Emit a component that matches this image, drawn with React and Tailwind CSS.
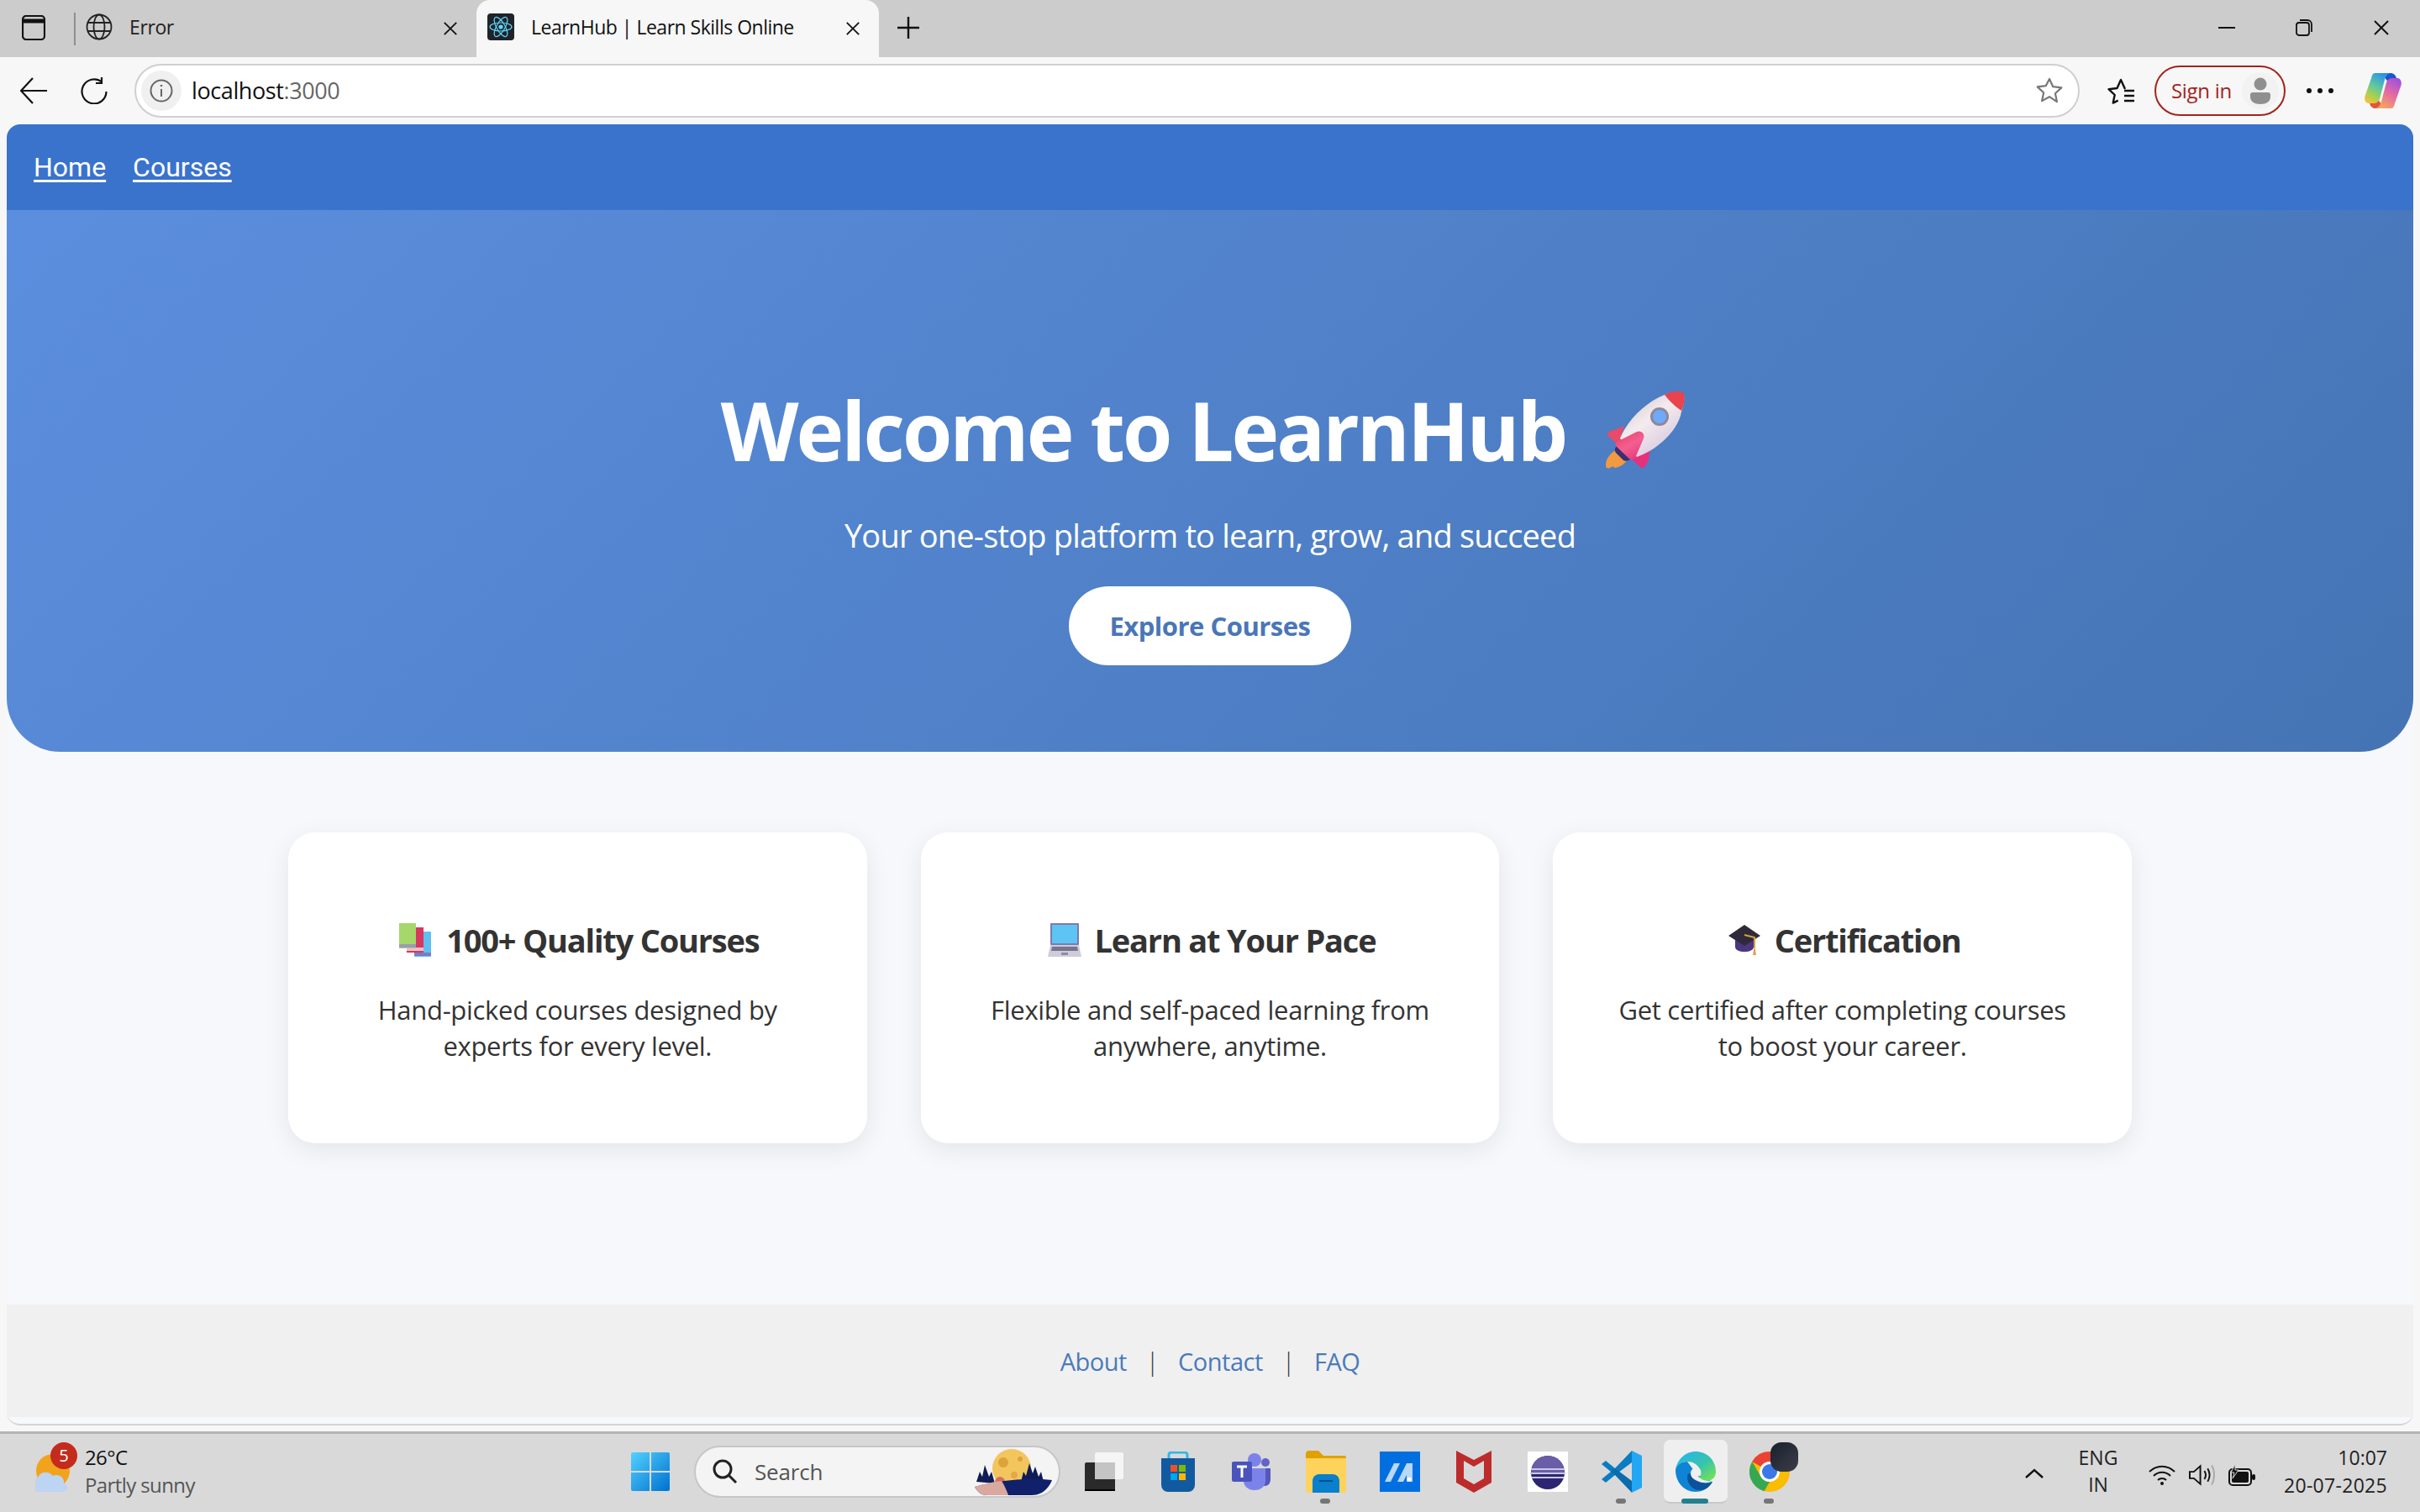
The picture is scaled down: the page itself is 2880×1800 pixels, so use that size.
const UI = "font-['Open_Sans',sans-serif]";

function Close({ className = "" }) {
  return (
    <svg viewBox="0 0 20 20" className={className} fill="none" stroke="#111" strokeWidth="2">
      <path d="M2 2l16 16M18 2L2 18" />
    </svg>
  );
}

function Globe() {
  return (
    <svg viewBox="0 0 32 32" className="w-8 h-8" fill="none" stroke="#222" strokeWidth="1.8">
      <circle cx="16" cy="16" r="14.5" />
      <ellipse cx="16" cy="16" rx="6.5" ry="14.5" />
      <path d="M2 11h28M2 21h28" />
    </svg>
  );
}

function ReactIcon() {
  return (
    <svg viewBox="0 0 32 32" className="w-8 h-8">
      <rect width="32" height="32" rx="4" fill="#20232a" />
      <g fill="none" stroke="#61dafb" strokeWidth="1.2">
        <ellipse cx="16" cy="16" rx="13" ry="5" />
        <ellipse cx="16" cy="16" rx="13" ry="5" transform="rotate(60 16 16)" />
        <ellipse cx="16" cy="16" rx="13" ry="5" transform="rotate(120 16 16)" />
      </g>
      <circle cx="16" cy="16" r="2.6" fill="#61dafb" />
    </svg>
  );
}

function TabStrip() {
  return (
    <div className="h-[68px] bg-[#cccccc] flex items-stretch shrink-0">
      <div className="w-[88px] flex items-center pl-[26px] pb-[2px]">
        <svg viewBox="0 0 28 30" className="w-[28px] h-[30px]" fill="none" stroke="#111" strokeWidth="2.2">
          <rect x="1" y="1" width="26" height="28" rx="4" />
          <path d="M1 7h26" strokeWidth="5" />
        </svg>
      </div>
      <div className="w-[479px] flex items-center pl-[14px] pb-[4px] relative">
        <div className="absolute left-0 top-[15px] w-[2px] h-[39px] bg-[#8f8f8f]" />
        <Globe />
        <span className="ml-[20px] text-[23px] text-[#222] tracking-[-0.4px]">Error</span>
        <Close className="w-[18px] h-[18px] absolute left-[439px] top-[25px]" />
      </div>
      <div className="w-[479px] bg-[#f7f7f7] rounded-t-[16px] flex items-center pl-[13px] pb-[4px] relative">
        <ReactIcon />
        <span className="ml-[20px] text-[23px] text-[#111] tracking-[-0.5px]">LearnHub | Learn Skills Online</span>
        <Close className="w-[18px] h-[18px] absolute left-[439px] top-[25px]" />
      </div>
      <div className="w-[22px]" />
      <div className="flex items-center pb-[3px]">
        <svg viewBox="0 0 26 26" className="w-[26px] h-[26px]" fill="none" stroke="#111" strokeWidth="2.4">
          <path d="M13 0v26M0 13h26" />
        </svg>
      </div>
      <div className="flex-1" />
      <div className="flex items-center pr-[36px] gap-[72px] pb-[2px]">
        <div className="w-[20px] h-[2px] bg-[#111]" />
        <svg viewBox="0 0 20 20" className="w-[20px] h-[20px]" fill="none" stroke="#111" strokeWidth="1.8">
          <rect x="1" y="4" width="15" height="15" rx="3" />
          <path d="M5 1h9a5 5 0 0 1 5 5v9" />
        </svg>
        <Close className="w-[20px] h-[20px]" />
      </div>
    </div>
  );
}

function Copilot() {
  const ribbon = "M12 0H31C27 1 25 4 24 8L18 31C17 34 14 36 11 36H5C1 36-1 31 1 26L8 6C9 2 10 0 12 0Z";
  return (
    <svg viewBox="0 0 44 42" className="w-[44px] h-[42px]">
      <defs>
        <linearGradient id="cpa" x1="0.7" y1="0" x2="0.2" y2="1">
          <stop offset="0" stopColor="#2b8fef" />
          <stop offset="0.45" stopColor="#5cc8a0" />
          <stop offset="0.75" stopColor="#a8d050" />
          <stop offset="1" stopColor="#f4c23d" />
        </linearGradient>
        <linearGradient id="cpb" x1="0.7" y1="0" x2="0.2" y2="1">
          <stop offset="0" stopColor="#f6a660" />
          <stop offset="0.5" stopColor="#e46aa0" />
          <stop offset="1" stopColor="#a050e0" />
        </linearGradient>
      </defs>
      <path d="M20 0h11c3 0 6 2 7 6l2 4c-4-2-9-2-11 2z" fill="#1e56c9" />
      <path d="M24 42H13c-3 0-6-2-7-6l-2-4c4 2 9 2 11-2z" fill="#e0583a" />
      <path d={ribbon} fill="url(#cpa)" />
      <path d={ribbon} fill="url(#cpb)" transform="rotate(180 22 21)" />
    </svg>
  );
}

function Toolbar() {
  return (
    <div className="h-[80px] bg-[#f7f7f7] flex items-center shrink-0 relative">
      <div className="w-[96px] pl-[24px] flex items-center">
        <svg viewBox="0 0 32 32" className="w-[32px] h-[32px]" fill="none" stroke="#111" strokeWidth="2.2">
          <path d="M1 16h31M15 1L1 16l14 15" />
        </svg>
      </div>
      <div className="w-[64px] flex items-center">
        <svg viewBox="0 0 32 32" className="w-[32px] h-[32px]" fill="none" stroke="#111" strokeWidth="2.2">
          <path d="M25 5.5A14.5 14.5 0 1 0 30.5 17M25 0v7h-7" />
        </svg>
      </div>
      <div className="w-[2315px] h-[64px] bg-white border-2 border-[#cfcfcf] rounded-full flex items-center pl-[6px] pr-[18px]">
        <div className="w-[48px] h-[48px] rounded-full bg-[#f0f0f0] flex items-center justify-center">
          <svg viewBox="0 0 28 28" className="w-[28px] h-[28px]" fill="none" stroke="#666" strokeWidth="2">
            <circle cx="14" cy="14" r="12.5" />
            <path d="M14 12v9" />
            <path d="M14 7v2" strokeWidth="2.4" />
          </svg>
        </div>
        <span className="ml-[12px] text-[27px] text-[#111] tracking-[-0.4px]">
          localhost<span className="text-[#666]">:3000</span>
        </span>
        <div className="flex-1" />
        <svg viewBox="0 0 32 32" className="w-[32px] h-[32px]" fill="none" stroke="#777" strokeWidth="2.2" strokeLinejoin="round">
          <path d="M16 2l4.3 9.2 10 1.2-7.4 6.8 2 9.9L16 23.2l-8.900 4.900 2-9.900-7.400-6.800 10-1.200z" />
        </svg>
      </div>
      <div className="w-[33px]" />
      <svg viewBox="0 0 32 32" className="w-[32px] h-[32px]" fill="none" stroke="#111" strokeWidth="2.4" strokeLinejoin="round">
        <path d="M21 14l-5-11-4.500 10-10 1.200 7.200 6.800-2 9.600 6-3" />
        <path d="M20 16h12M20 22h12M20 28h12" />
      </svg>
      <div className="w-[24px]" />
      <div className="w-[156px] h-[60px] rounded-full border-2 border-[#a3231c] flex items-center pl-[18px] relative">
        <span className="text-[24px] text-[#a3231c] tracking-[-0.3px]">Sign in</span>
        <div className="absolute right-[6px] top-[6px] w-[44px] h-[44px] rounded-full bg-[#f2f2f2] flex items-center justify-center">
          <svg viewBox="0 0 24 32" className="w-[24px] h-[32px]" fill="#8f8f8f">
            <circle cx="12" cy="8" r="7.500" />
            <path d="M0 21c0-2 1-3 3-3h18c2 0 3 1 3 3v2c0 6-5 9-12 9S0 29 0 23z" />
          </svg>
        </div>
      </div>
      <div className="w-[25px]" />
      <div className="flex gap-[7px] w-[69px]">
        <div className="w-[6px] h-[6px] rounded-full bg-[#111]" />
        <div className="w-[6px] h-[6px] rounded-full bg-[#111]" />
        <div className="w-[6px] h-[6px] rounded-full bg-[#111]" />
      </div>
      <Copilot />
    </div>
  );
}

function Rocket() {
  return (
    <svg viewBox="0 0 100 100" className="w-[100px] h-[100px]">
      <defs>
        <linearGradient id="rb" x1="0.2" y1="0.1" x2="0.8" y2="0.9">
          <stop offset="0" stopColor="#d8ccd2" />
          <stop offset="0.4" stopColor="#f3ecef" />
          <stop offset="1" stopColor="#d6c6dc" />
        </linearGradient>
        <linearGradient id="rf" x1="0.2" y1="0" x2="0.8" y2="1">
          <stop offset="0" stopColor="#ee3f6a" />
          <stop offset="0.5" stopColor="#f26090" />
          <stop offset="1" stopColor="#e8357a" />
        </linearGradient>
      </defs>
      <path d="M18 73C10 78 5 84 5 92C5 96 8 96 10 95C12 93 14 93 16 95C22 94 28 90 30 86Z" fill="#f19a40" />
      <path d="M27 45L9 52C6 54 7 56 9 58L20 68Z" fill="#e84a6a" />
      <path d="M58 73C57 82 55 90 51 94C49 96 47 95 45 93L33 82Z" fill="#e6307c" />
      <path d="M75 8C50 18 30 40 22 60L42 82C70 72 92 48 95 28C98 20 99 12 98 8C94 4 84 4 75 8Z" fill="url(#rb)" />
      <path d="M75 8C84 3 94 2 98 7C100 12 98 20 95 27C88 22 80 15 75 8Z" fill="#e8434f" />
      <path d="M18 69L34 85C31 87 28 87 26 86L17 77C15 74 16 71 18 69Z" fill="#3a2f72" />
      <path d="M42 52L20 63C16 65 16 68 18 70L33 84C36 86 39 85 41 81L50 60C52 54 47 50 42 52Z" fill="url(#rf)" />
      <circle cx="69" cy="34" r="11" fill="#8f8798" />
      <circle cx="69" cy="34" r="8" fill="#6ea9fb" />
    </svg>
  );
}

function Books() {
  return (
    <svg viewBox="0 0 40 40" className="w-[40px] h-[40px]">
      <rect x="18" y="10" width="20" height="30" rx="1" fill="#60bff0" />
      <rect x="18" y="35" width="20" height="4" fill="#7a7cc8" />
      <rect x="9" y="5" width="20" height="30" fill="#d6385e" />
      <rect x="9" y="29" width="20" height="4" fill="#e8c2cc" />
      <rect x="0" y="0" width="20" height="30" fill="#a5d76a" />
      <rect x="0" y="25" width="20" height="4" fill="#9d9ab8" />
    </svg>
  );
}

function Laptop() {
  return (
    <svg viewBox="0 0 40 40" className="w-[40px] h-[40px]">
      <rect x="3" y="0" width="34" height="26" rx="1" fill="#7d7ab0" />
      <rect x="5" y="2" width="30" height="22" fill="#5ec4f4" />
      <path d="M3 26h34l3 14H0z" fill="#cfcbdc" />
      <path d="M5 28h30l1 5H4z" fill="#77748c" />
      <rect x="16" y="35" width="8" height="3" fill="#8f8ca0" />
    </svg>
  );
}

function Cap() {
  return (
    <svg viewBox="0 0 40 40" className="w-[40px] h-[40px]">
      <path d="M9 16h22v12c0 4-5 6-11 6S9 32 9 28z" fill="#4b3680" />
      <path d="M20 2l19 13-19 12L1 15z" fill="#2f2a3a" />
      <path d="M20 14l12 3v12" fill="none" stroke="#d9a13c" strokeWidth="2" />
      <path d="M32 26l2 12h-4z" fill="#ec9a4a" />
    </svg>
  );
}

const cards = [
  { Icon: Books, title: "100+ Quality Courses", lines: ["Hand-picked courses designed by", "experts for every level."] },
  { Icon: Laptop, title: "Learn at Your Pace", lines: ["Flexible and self-paced learning from", "anywhere, anytime."] },
  { Icon: Cap, title: "Certification", lines: ["Get certified after completing courses", "to boost your career."] },
];

function Card({ Icon, title, lines }) {
  return (
    <div className="h-[370px] bg-white rounded-[32px] shadow-[0_8px_30px_rgba(0,0,0,0.08)] flex flex-col items-center pt-[100px]">
      <h3 className="flex items-center gap-[16px] h-[56px] pl-[4px] text-[38px] font-bold text-[#333] tracking-[-1.2px]">
        <Icon />
        {title}
      </h3>
      <div className="mt-[34px] text-[31px] leading-[43px] text-[#333] text-center tracking-[-0.3px]">
        {lines.map((line) => (
          <p key={line}>{line}</p>
        ))}
      </div>
    </div>
  );
}

function Page() {
  return (
    <div className="flex-1 mx-[8px] rounded-[16px] overflow-hidden bg-[#f6f8fc] flex flex-col border-b-2 border-[#d4d4d4]">
      <nav className="h-[102px] bg-[#3973cc] flex items-center gap-[32px] pl-[32px] shrink-0 font-['Roboto',sans-serif] text-[32px] text-white">
        <a className="underline underline-offset-[4px]">Home</a>
        <a className="underline underline-offset-[4px]">Courses</a>
      </nav>
      <section className="h-[645px] shrink-0 rounded-b-[64px] bg-[linear-gradient(135deg,#5b8ede,#4574b4)] flex flex-col items-center text-white pt-[190px]">
        <h1 className="h-[144px] flex items-center text-[96px] font-bold tracking-[-3px] leading-none">
          <span>Welcome to LearnHub</span>
          <span className="ml-[43px] mr-[-2px] w-[118px]">
            <Rocket />
          </span>
        </h1>
        <p className="mt-[29px] h-[48px] leading-[48px] text-[38px] tracking-[-0.8px]">Your one-stop platform to learn, grow, and succeed</p>
        <a className="mt-[37px] w-[336px] h-[94px] rounded-full bg-white flex items-center justify-center text-[31px] font-bold text-[#4a76b8] tracking-[-0.5px]">
          Explore Courses
        </a>
      </section>
      <main className="flex-1 pt-[96px]">
        <div className="w-[2194px] ml-[335px] grid grid-cols-3 gap-[64px]">
          {cards.map((card) => (
            <Card key={card.title} {...card} />
          ))}
        </div>
      </main>
      <footer className="h-[134px] mb-[8px] bg-[#f0f0f0] flex items-center justify-center pt-[2px] text-[29px] text-[#4a7aba] tracking-[-0.5px] shrink-0">
        <a>About</a>
        <span className="mx-[23px] text-[#333] font-light">|</span>
        <a>Contact</a>
        <span className="mx-[23px] text-[#333] font-light">|</span>
        <a>FAQ</a>
      </footer>
    </div>
  );
}

function Slot({ children, dot, active }) {
  return (
    <div className="w-[88px] h-[90px] flex items-center justify-center relative">
      {active && <div className="absolute left-[6px] top-[7px] w-[76px] h-[76px] rounded-[8px] bg-[#efefef] border-b-2 border-[#c8c8c8]" />}
      <div className="relative">{children}</div>
      {dot && <div className="absolute left-[37px] top-[77px] w-[12px] h-[6px] rounded-full bg-[#767676]" />}
      {active && <div className="absolute left-[27px] top-[77px] w-[32px] h-[6px] rounded-full bg-[#24808f]" />}
    </div>
  );
}

function WinLogo() {
  return (
    <svg viewBox="0 0 46 46" className="w-[46px] h-[46px]">
      <defs>
        <linearGradient id="wl" x1="0" y1="0" x2="1" y2="1">
          <stop offset="0" stopColor="#52d2ff" />
          <stop offset="1" stopColor="#0070cf" />
        </linearGradient>
      </defs>
      <path d="M2 0h20v22H0V2a2 2 0 0 1 2-2zM24 0h20a2 2 0 0 1 2 2v20H24zM0 24h22v22H2a2 2 0 0 1-2-2zM24 24h22v20a2 2 0 0 1-2 2H24z" fill="url(#wl)" />
    </svg>
  );
}

function SearchArt() {
  return (
    <svg viewBox="0 0 92 56" className="w-[92px] h-[56px]">
      <circle cx="44" cy="24" r="23" fill="#f3c65d" />
      <circle cx="34" cy="17" r="6" fill="#dca33b" />
      <circle cx="54" cy="13" r="3" fill="#dca33b" />
      <circle cx="47" cy="32" r="4" fill="#e4a84a" />
      <circle cx="30" cy="40" r="6" fill="#d9705c" />
      <path d="M2 40l4-12 3 6 3-14 5 14 3-6 4 14zM55 40l3-12 3 5 4-15 4 12 3-8 4 12 3-6 3 12z" fill="#101c56" />
      <path d="M0 46c20-6 60-12 92-8-4 10-12 18-24 18H14C8 56 3 52 0 46z" fill="#11206a" />
      <path d="M0 46c10-3 22-6 32-7 4 6 6 12 8 17H14C8 56 3 52 0 46z" fill="#d9a9a0" />
    </svg>
  );
}

function TaskView() {
  return (
    <svg viewBox="0 0 46 46" className="w-[46px] h-[46px]">
      <rect x="0" y="12" width="36" height="34" rx="2" fill="#2a2a2a" />
      <rect x="0" y="44" width="36" height="2" fill="#000" />
      <rect x="12" y="0" width="34" height="32" rx="2" fill="#f5f5f5" />
      <rect x="12" y="12" width="24" height="20" fill="#c4c4c4" />
    </svg>
  );
}

function Store() {
  return (
    <svg viewBox="0 0 40 48" className="w-[40px] h-[48px]">
      <path d="M9 8V4a3 3 0 0 1 3-3h16a3 3 0 0 1 3 3v4" fill="none" stroke="#2fb8ea" strokeWidth="3" />
      <path d="M0 8h40v32a8 8 0 0 1-8 8H8a8 8 0 0 1-8-8z" fill="#125aa0" />
      <rect x="11" y="16" width="8" height="8" fill="#f25022" />
      <rect x="21" y="16" width="8" height="8" fill="#7fba00" />
      <rect x="11" y="26" width="8" height="8" fill="#00a4ef" />
      <rect x="21" y="26" width="8" height="8" fill="#ffb900" />
    </svg>
  );
}

function Teams() {
  return (
    <svg viewBox="0 0 48 44" className="w-[48px] h-[44px]">
      <circle cx="40" cy="11" r="5" fill="#6264c7" />
      <path d="M32 18h14v13c0 5-3 8-7 8s-7-3-7-8z" fill="#5558ba" />
      <circle cx="27" cy="8" r="8" fill="#7b83eb" />
      <path d="M14 18h26v15c0 6-5 11-13 11s-13-5-13-11z" fill="#7b83eb" />
      <rect x="0" y="10" width="24" height="24" rx="2" fill="#4b53bc" />
      <path d="M6 16h12M12 16v13" stroke="#fff" strokeWidth="3" fill="none" />
    </svg>
  );
}

function Folder() {
  return (
    <svg viewBox="0 0 48 50" className="w-[48px] h-[50px]">
      <path d="M0 4a4 4 0 0 1 4-4h11l6 6h25a2 2 0 0 1 2 2v6H0z" fill="#dfa000" />
      <path d="M0 9h48v38a3 3 0 0 1-3 3H3a3 3 0 0 1-3-3z" fill="#fdd35c" />
      <path d="M8 50V36a8 8 0 0 1 8-8h16a8 8 0 0 1 8 8v14z" fill="#0a7fcb" />
      <path d="M16 36h16" stroke="#05508c" strokeWidth="2" />
    </svg>
  );
}

function MaLogo() {
  return (
    <svg viewBox="0 0 48 48" className="w-[48px] h-[48px]">
      <rect width="48" height="48" fill="#026fe0" />
      <path d="M6 36l11-22h7L13 36zM21 36l11-22h7v22h-7v-8l-4 8z" fill="#b8d8f8" />
      <circle cx="35" cy="33" r="2.500" fill="#fff" />
    </svg>
  );
}

function McAfee() {
  return (
    <svg viewBox="0 0 42 50" className="w-[42px] h-[50px]">
      <path d="M0 0l21 11L42 0v38L21 50 0 38zM9 12v21l12 7 12-7V12l-12 7z" fill="#bd2c2c" fillRule="evenodd" />
    </svg>
  );
}

function Eclipse() {
  return (
    <svg viewBox="0 0 48 48" className="w-[48px] h-[48px]">
      <rect width="48" height="48" fill="#fff" />
      <circle cx="24" cy="25" r="20" fill="#2c2571" />
      <path d="M4 25a20 20 0 0 1 40 0z" fill="#6a5ea8" />
      <path d="M4 21h40M3 26h42M5 31h38" stroke="#c8c8e4" strokeWidth="2" />
    </svg>
  );
}

function VsCode() {
  return (
    <svg viewBox="0 0 48 50" className="w-[48px] h-[50px]">
      <path d="M36 0l12 6v38l-12 6z" fill="#23a7f2" />
      <path d="M36 0v14L16 29 5 38 0 34l11-9L0 16l5-4 11 9z" fill="#0b7cc1" />
      <path d="M36 50L16 29l-5-4 5-4L36 36z" fill="#0a6cad" />
    </svg>
  );
}

function Edge() {
  return (
    <svg viewBox="0 0 48 48" className="w-[48px] h-[48px]">
      <defs>
        <linearGradient id="eg" x1="0.2" y1="0" x2="1" y2="0.8">
          <stop offset="0" stopColor="#29b6e8" />
          <stop offset="0.55" stopColor="#35c3b0" />
          <stop offset="1" stopColor="#6fe05a" />
        </linearGradient>
      </defs>
      <path d="M0 22C0 36 10 48 24 48C33 48 40 43 44 36L26 28L14 12C6 12 1 16 0 22Z" fill="#0f83d4" />
      <path d="M14 30C14 40 22 47 31 46C37 45 41 41 44 36C38 39 31 38 26 35C21 33 18 30 18 26C15 26 14 28 14 30Z" fill="#0b5298" />
      <path d="M0 22C2 9 12 0 24 0C38 0 48 11 48 24C48 31 43 35 37 35C32 35 28 33 27 31C30 29 31 27 30 23C27 15 20 12 14 12C7 12 2 16 0 22Z" fill="url(#eg)" />
      <path d="M18 26C18 20 24 18 28 20C31 22 30 26 27 30C31 34 38 36 44 35C40 38 32 38 26 35C21 33 18 30 18 26Z" fill="#efefef" />
    </svg>
  );
}

function Chrome() {
  return (
    <div className="relative w-[48px] h-[48px]">
      <svg viewBox="0 0 48 48" className="w-[48px] h-[48px]">
        <circle cx="24" cy="24" r="24" fill="#fbbc04" />
        <path d="M24 0A24 24 0 0 1 44.800 12H24A12 12 0 0 0 13.600 18L3.200 12A24 24 0 0 1 24 0Z" fill="#ea4335" />
        <path d="M3.200 12L13.600 30C15.700 33.600 19.600 36 24 36L17.500 47.200A24 24 0 0 1 3.200 12Z" fill="#34a853" />
        <circle cx="24" cy="24" r="12" fill="#fff" />
        <circle cx="24" cy="24" r="9" fill="#3b78e7" />
      </svg>
      <div className="absolute left-[25px] top-[-11px] w-[33px] h-[35px] rounded-[13px] bg-[linear-gradient(135deg,#18202c,#3c3e48)]" />
    </div>
  );
}

function Taskbar() {
  return (
    <div className="h-[96px] mt-[7px] bg-[#d9d9d9] border-t-[3px] border-[#b4b4b4] relative flex justify-center shrink-0">
      <div className="absolute left-[42px] top-[23px] w-[40px] h-[46px]">
        <svg viewBox="0 0 44 48" className="w-[44px] h-[48px]">
          <circle cx="21" cy="21" r="20" fill="#f2a31c" />
          <path d="M4 46a8 8 0 0 1-1-16c1-8 13-10 18-3 7-3 14 2 13 9 5 1 6 10-2 10z" fill="#bed4f3" />
        </svg>
      </div>
      <div className="absolute left-[60px] top-[10px] w-[32px] h-[32px] rounded-full bg-[#c42b1c] flex items-center justify-center text-[20px] text-white">5</div>
      <div className="absolute left-[101px] top-[11px] text-[24px] leading-[33px] tracking-[-0.6px]">
        <div className="text-[#111]">26°C</div>
        <div className="text-[#555]">Partly sunny</div>
      </div>

      <Slot><WinLogo /></Slot>
      <div className="w-[436px] h-[62px] mt-[14px] mx-[8px] rounded-full bg-[#f4f4f4] border-2 border-[#c6c6c6] flex items-center pl-[20px] pr-[8px]">
        <svg viewBox="0 0 30 30" className="w-[30px] h-[30px]" fill="none" stroke="#222" strokeWidth="3">
          <circle cx="12" cy="12" r="10" />
          <path d="M19 19l9 9" />
        </svg>
        <span className="ml-[20px] text-[26px] text-[#555] tracking-[-0.2px]">Search</span>
        <div className="flex-1" />
        <SearchArt />
      </div>
      <Slot><TaskView /></Slot>
      <Slot><Store /></Slot>
      <Slot><Teams /></Slot>
      <Slot dot><Folder /></Slot>
      <Slot><MaLogo /></Slot>
      <Slot><McAfee /></Slot>
      <Slot><Eclipse /></Slot>
      <Slot dot><VsCode /></Slot>
      <Slot active><Edge /></Slot>
      <Slot dot><Chrome /></Slot>

      <div className="absolute left-[2410px] top-[41px]">
        <svg viewBox="0 0 22 12" className="w-[22px] h-[12px]" fill="none" stroke="#111" strokeWidth="2.4">
          <path d="M1 11L11 2l10 9" />
        </svg>
      </div>
      <div className="absolute left-[2457px] top-[12px] w-[80px] text-center text-[23px] leading-[32px] text-[#222]">
        <div>ENG</div>
        <div>IN</div>
      </div>
      <div className="absolute left-[2557px] top-[36px] flex items-center gap-[16px]">
        <svg viewBox="0 0 32 24" className="w-[32px] h-[24px]" fill="none" stroke="#111" strokeWidth="2">
          <path d="M1 8a21 21 0 0 1 30 0M6 13a14 14 0 0 1 20 0M11 18a7 7 0 0 1 10 0" />
          <circle cx="16" cy="22" r="2" fill="#111" stroke="none" />
        </svg>
        <svg viewBox="0 0 32 26" className="w-[31px] h-[26px]" fill="none" stroke="#111" strokeWidth="2">
          <path d="M1 9h5l8-7v22l-8-7H1z" />
          <path d="M19 8c2 3 2 7 0 10M23 5c3 5 3 11 0 16" />
          <path d="M28 1c4 7 4 17 0 24" stroke="#aaa" />
        </svg>
        <svg viewBox="0 0 32 26" className="w-[32px] h-[26px]">
          <rect x="1" y="6" width="26" height="19" rx="4" fill="none" stroke="#111" strokeWidth="2" />
          <rect x="4" y="9" width="20" height="13" rx="2" fill="#111" />
          <rect x="28" y="12" width="4" height="7" rx="2" fill="#111" />
          <path d="M8 0L3 10h4l-2 7 7-10H8z" fill="#111" stroke="#d9d9d9" strokeWidth="1" />
        </svg>
      </div>
      <div className="absolute right-[39px] top-[12px] text-right text-[23px] leading-[33px] text-[#222]">
        <div>10:07</div>
        <div className="tracking-[0.3px]">20-07-2025</div>
      </div>
    </div>
  );
}

export default function App() {
  return (
    <div className={`w-[2880px] h-[1800px] overflow-hidden flex flex-col bg-[#f7f7f7] ${UI}`}>
      <TabStrip />
      <Toolbar />
      <Page />
      <Taskbar />
    </div>
  );
}
